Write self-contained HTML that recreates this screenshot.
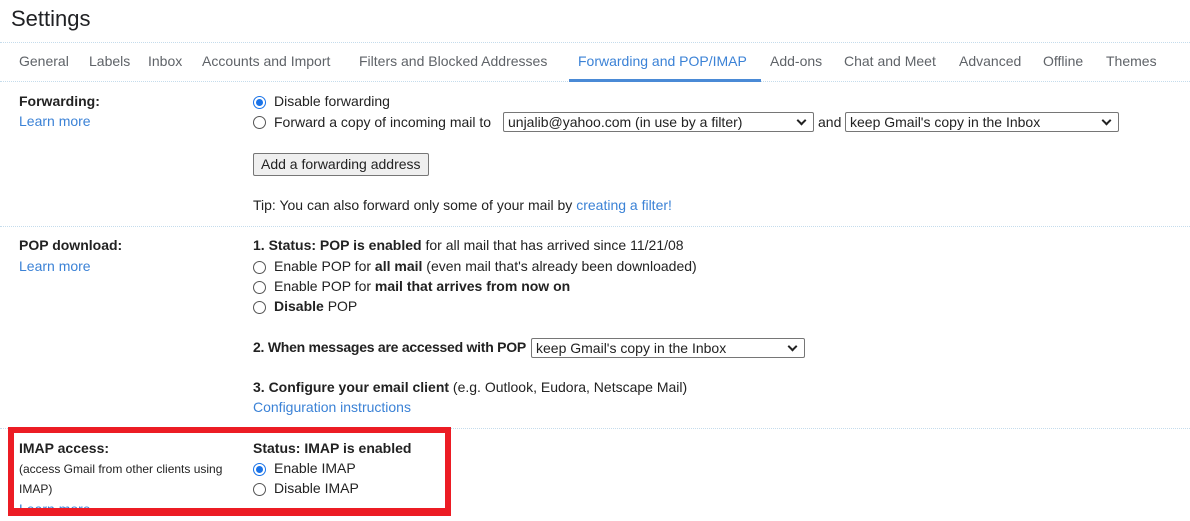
<!DOCTYPE html>
<html><head><meta charset="utf-8"><style>
body{margin:0;width:1190px;height:521px;background:#fff;font-family:"Liberation Sans",Arial,sans-serif;font-size:14px;color:#222;position:relative;overflow:hidden}
.a{position:absolute;white-space:nowrap;line-height:18px}
.t{position:absolute;top:53px;font-size:14px;color:#5f6368;white-space:nowrap}
.hr{position:absolute;left:0;right:0;border-top:1px dotted #c5dcec;height:0}
.lk{color:#3b82d6}
b{font-weight:bold}
.r{position:absolute;width:11px;height:11px;border:1px solid #555;border-radius:50%;background:#fff}
.r.on{border-color:#1a73e8}
.r.on::after{content:"";position:absolute;left:2px;top:2px;width:7px;height:7px;border-radius:50%;background:#1a73e8}
.sel{position:absolute;border:1px solid #767676;border-radius:2px;font-size:14px;line-height:18px;padding-left:4px;box-sizing:border-box;height:20px;color:#222}
.sel::after{content:"";position:absolute;right:8px;top:4px;width:5px;height:5px;border-right:2px solid #222;border-bottom:2px solid #222;transform:rotate(45deg)}
</style></head><body>
<div class="a" style="left:11px;top:6px;font-size:22px;line-height:26px;color:#202124">Settings</div>
<div class="hr" style="top:42px"></div>
<div class="t" style="left:19px">General</div>
<div class="t" style="left:89px">Labels</div>
<div class="t" style="left:148px">Inbox</div>
<div class="t" style="left:202px">Accounts and Import</div>
<div class="t" style="left:359px">Filters and Blocked Addresses</div>
<div class="t" style="left:578px;color:#3b82d6">Forwarding and POP/IMAP</div>
<div class="t" style="left:770px">Add-ons</div>
<div class="t" style="left:844px">Chat and Meet</div>
<div class="t" style="left:959px">Advanced</div>
<div class="t" style="left:1043px">Offline</div>
<div class="t" style="left:1106px">Themes</div>
<div class="hr" style="top:81px"></div>
<div style="position:absolute;left:569px;top:79px;width:192px;height:3px;background:#4a8ad6"></div>

<div class="a" style="left:19px;top:92px"><b>Forwarding:</b></div>
<div class="a lk" style="left:19px;top:112px">Learn more</div>
<div class="r on" style="left:253px;top:96px"></div>
<div class="a" style="left:274px;top:92px">Disable forwarding</div>
<div class="r" style="left:253px;top:116px"></div>
<div class="a" style="left:274px;top:113px">Forward a copy of incoming mail to</div>
<div class="sel" style="left:503px;top:112px;width:311px">unjalib@yahoo.com (in use by a filter)</div>
<div class="a" style="left:818px;top:113px">and</div>
<div class="sel" style="left:845px;top:112px;width:274px">keep Gmail's copy in the Inbox</div>
<div style="position:absolute;left:253px;top:153px;width:176px;height:23px;box-sizing:border-box;border:1px solid #767676;border-radius:2px;background:#efefef;line-height:20px;padding-left:7px">Add a forwarding address</div>
<div class="a" style="left:253px;top:196px">Tip: You can also forward only some of your mail by <span class="lk">creating a filter!</span></div>
<div class="hr" style="top:226px"></div>

<div class="a" style="left:19px;top:236px"><b>POP download:</b></div>
<div class="a lk" style="left:19px;top:257px">Learn more</div>
<div class="a" style="left:253px;top:236px"><b>1. Status: POP is enabled</b> for all mail that has arrived since 11/21/08</div>
<div class="r" style="left:253px;top:261px"></div>
<div class="a" style="left:274px;top:257px">Enable POP for <b>all mail</b> (even mail that's already been downloaded)</div>
<div class="r" style="left:253px;top:281px"></div>
<div class="a" style="left:274px;top:277px">Enable POP for <b>mail that arrives from now on</b></div>
<div class="r" style="left:253px;top:301px"></div>
<div class="a" style="left:274px;top:297px"><b>Disable</b> POP</div>
<div class="a" style="left:253px;top:338px;letter-spacing:-0.25px"><b>2. When messages are accessed with POP</b></div>
<div class="sel" style="left:531px;top:338px;width:274px">keep Gmail's copy in the Inbox</div>
<div class="a" style="left:253px;top:378px"><b>3. Configure your email client</b> (e.g. Outlook, Eudora, Netscape Mail)</div>
<div class="a lk" style="left:253px;top:398px">Configuration instructions</div>
<div class="hr" style="top:428px"></div>

<div class="a" style="left:19px;top:439px"><b>IMAP access:</b></div>
<div class="a" style="left:19px;top:460px;font-size:12px">(access Gmail from other clients using</div>
<div class="a" style="left:19px;top:480px;font-size:12px">IMAP)</div>
<div class="a lk" style="left:19px;top:500px">Learn more</div>
<div class="a" style="left:253px;top:439px"><b>Status: IMAP is enabled</b></div>
<div class="r on" style="left:253px;top:463px"></div>
<div class="a" style="left:274px;top:459px">Enable IMAP</div>
<div class="r" style="left:253px;top:483px"></div>
<div class="a" style="left:274px;top:479px">Disable IMAP</div>
<div style="position:absolute;left:8px;top:427px;width:443px;height:89px;box-sizing:border-box;border:6px solid #ec1c24;border-bottom-width:8px"></div>
<div style="position:absolute;left:0;top:516px;width:1190px;height:5px;background:#fff"></div>
</body></html>
